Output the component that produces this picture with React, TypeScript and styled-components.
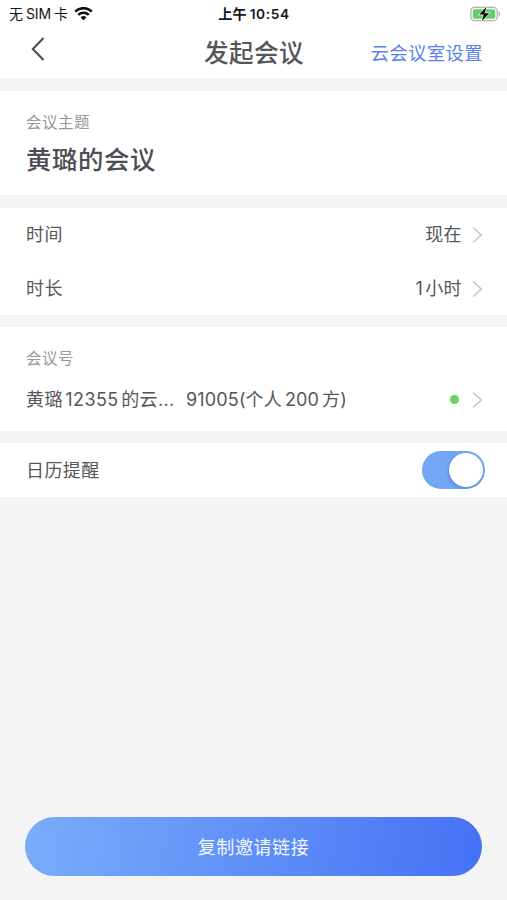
import React from "react";
import styled, { createGlobalStyle } from "styled-components";

const GlobalStyle = createGlobalStyle`
  * { box-sizing: border-box; }
  body {
    margin: 0;
    background: #f4f4f4;
    font-family: Inter, "Noto Sans CJK SC", sans-serif;
    color: #55565a;
  }
`;

const Screen = styled.div`
  width: 507px;
  height: 900px;
  display: flex;
  flex-direction: column;
  background: #f4f4f4;
  overflow: hidden;
`;

const Top = styled.header`
  height: 78px;
  background: #fff;
  flex: none;
`;

const StatusBar = styled.div`
  height: 27px;
  padding: 0 6px 0 9px;
  display: grid;
  grid-template-columns: 1fr auto 1fr;
  align-items: center;
  color: #151515;
  font-size: 14px;
  line-height: 20px;
`;

const Carrier = styled.div`
  display: flex;
  align-items: center;
  gap: 6px;
  white-space: nowrap;
`;

const CarrierText = styled.span`
  display: flex;
  gap: 3px;
  letter-spacing: -0.1px;
`;

const Clock = styled.div`
  font-weight: 600;
  font-size: 14.2px;
  display: flex;
  gap: 3px;
  margin-right: 2px;
  white-space: nowrap;
`;

const ClockDigits = styled.span`
  font-size: 13.7px;
  letter-spacing: 0.6px;
`;

const BatterySlot = styled.div`
  display: flex;
  justify-content: flex-end;
`;

const NavBar = styled.nav`
  height: 51px;
  padding: 0 24px 0 30px;
  display: grid;
  grid-template-columns: 1fr auto 1fr;
  align-items: center;
`;

const BackButton = styled.button`
  border: 0;
  padding: 0;
  background: none;
  width: 16px;
  height: 26px;
  margin-top: -7px;
`;

const Title = styled.h1`
  margin: 0 5px 0 0;
  font-size: 24.6px;
  letter-spacing: 0.4px;
  font-weight: 500;
  line-height: 36px;
`;

const SettingsLink = styled.a`
  justify-self: end;
  color: #5680ea;
  font-size: 18.2px;
  letter-spacing: 0.5px;
  line-height: 26px;
  padding-top: 1px;
  white-space: nowrap;
`;

const Section = styled.section<{ $top: number; $height: number }>`
  flex: none;
  margin-top: ${(p) => p.$top}px;
  height: ${(p) => p.$height}px;
  background: #fff;
  padding: 0 24px 0 26px;
`;

const Label = styled.div`
  padding-top: 20px;
  height: 43px;
  color: #98989b;
  font-size: 15.5px;
  letter-spacing: 0.5px;
  line-height: 24px;
`;

const Subject = styled.div`
  font-size: 25.4px;
  font-weight: 500;
  letter-spacing: 0.6px;
  line-height: 36px;
  padding-top: 8px;
  color: #4c4d52;
`;

const Row = styled.div<{ $height: number }>`
  height: ${(p) => p.$height}px;
  display: flex;
  align-items: center;
  font-size: 18px;
  letter-spacing: 0.4px;
  line-height: 26px;
  white-space: nowrap;
`;

const Value = styled.span`
  margin-left: auto;
  display: flex;
  align-items: center;
  gap: 10px;
`;

const Duration = styled.span`
  display: flex;
  gap: 2px;
`;

const RoomName = styled.span`
  width: 160px;
  display: flex;
  gap: 2.5px;
`;

const RoomNumber = styled.span`
  display: flex;
  letter-spacing: 0.15px;
`;

const Capacity = styled.span`
  margin: 0 3px;
`;

const Online = styled.i`
  width: 9px;
  height: 9px;
  border-radius: 50%;
  background: #66d45e;
  margin-right: 3px;
`;

const ToggleLabel = styled.span`
  padding-top: 1px;
`;

const Toggle = styled.button`
  margin-left: auto;
  margin-right: -2px;
  width: 63px;
  height: 38px;
  padding: 2px;
  border: 0;
  border-radius: 19px;
  background: #73a6f5;
  display: flex;
  justify-content: flex-end;
  align-items: center;
`;

const Knob = styled.span`
  width: 34px;
  height: 34px;
  border-radius: 50%;
  background: #fff;
  box-shadow: -1px 1px 3px rgba(30, 70, 150, 0.35);
`;

const CopyButton = styled.button`
  flex: none;
  margin: auto 25px 24px;
  padding: 0 6px 2px;
  height: 59px;
  border: 0;
  border-radius: 30px;
  background: linear-gradient(100deg, #78acfa 2%, #4672f5 98%);
  color: #f3f7ff;
  font-family: inherit;
  font-size: 18px;
  letter-spacing: 0.6px;
`;

const Chevron = () => (
  <svg width="11" height="18" viewBox="0 0 11 18" fill="none">
    <path d="M1 1.5 9.3 9 1 16.5" stroke="#c6c6c8" strokeWidth="1.6" />
  </svg>
);

const Wifi = () => (
  <svg width="19" height="14" viewBox="0 0 19 14" fill="none">
    <path d="M1.2 4.5A12 12 0 0 1 17.8 4.5" stroke="#111" strokeWidth="2.6" />
    <path d="M4.2 7.8A7.7 7.7 0 0 1 14.8 7.8" stroke="#111" strokeWidth="2.4" />
    <path d="M6.5 10.3A4.4 4.4 0 0 1 12.5 10.3L9.5 13.4Z" fill="#111" />
  </svg>
);

const Battery = () => (
  <svg width="31" height="16" viewBox="0 0 31 16" fill="none">
    <rect x="0.8" y="1.3" width="26.4" height="13.4" rx="4" stroke="#b2b2b2" strokeWidth="1.3" />
    <rect x="2.8" y="3.2" width="22.4" height="9.6" rx="2" fill="#65cf66" />
    <path d="M28.5 5.5c2.2.6 2.2 4.4 0 5z" fill="#b2b2b2" />
    <path d="M16.5.8 9.2 8.6h4.5L11.8 15.2 19.2 7.2h-4.5Z" fill="#080808" stroke="#fff" strokeWidth="1.2" paintOrder="stroke" />
  </svg>
);

export default function App() {
  return (
    <>
      <GlobalStyle />
      <Screen>
        <Top>
          <StatusBar>
            <Carrier>
              <CarrierText><span>无</span><span>SIM</span><span>卡</span></CarrierText>
              <Wifi />
            </Carrier>
            <Clock>上午<ClockDigits>10:54</ClockDigits></Clock>
            <BatterySlot><Battery /></BatterySlot>
          </StatusBar>
          <NavBar>
            <BackButton aria-label="返回">
              <svg width="16" height="26" viewBox="0 0 16 26" fill="none">
                <path d="M13.5 2 2.8 13 13.5 24" stroke="#4a4a4d" strokeWidth="2" />
              </svg>
            </BackButton>
            <Title>发起会议</Title>
            <SettingsLink>云会议室设置</SettingsLink>
          </NavBar>
        </Top>
        <Section $top={13} $height={104}>
          <Label>会议主题</Label>
          <Subject>黄璐的会议</Subject>
        </Section>
        <Section $top={13} $height={107}>
          <Row $height={54}>时间<Value>现在<Chevron /></Value></Row>
          <Row $height={53}>时长<Value><Duration><span>1</span><span>小时</span></Duration><Chevron /></Value></Row>
        </Section>
        <Section $top={12} $height={104}>
          <Label>会议号</Label>
          <Row $height={59}>
            <RoomName><span>黄璐</span><span>12355</span><span>的云...</span></RoomName>
            <RoomNumber>91005(个人<Capacity>200</Capacity>方)</RoomNumber>
            <Value><Online /><Chevron /></Value>
          </Row>
        </Section>
        <Section $top={12} $height={54}>
          <Row $height={54}>
            <ToggleLabel>日历提醒</ToggleLabel>
            <Toggle role="switch" aria-checked="true" aria-label="日历提醒"><Knob /></Toggle>
          </Row>
        </Section>
        <CopyButton>复制邀请链接</CopyButton>
      </Screen>
    </>
  );
}
